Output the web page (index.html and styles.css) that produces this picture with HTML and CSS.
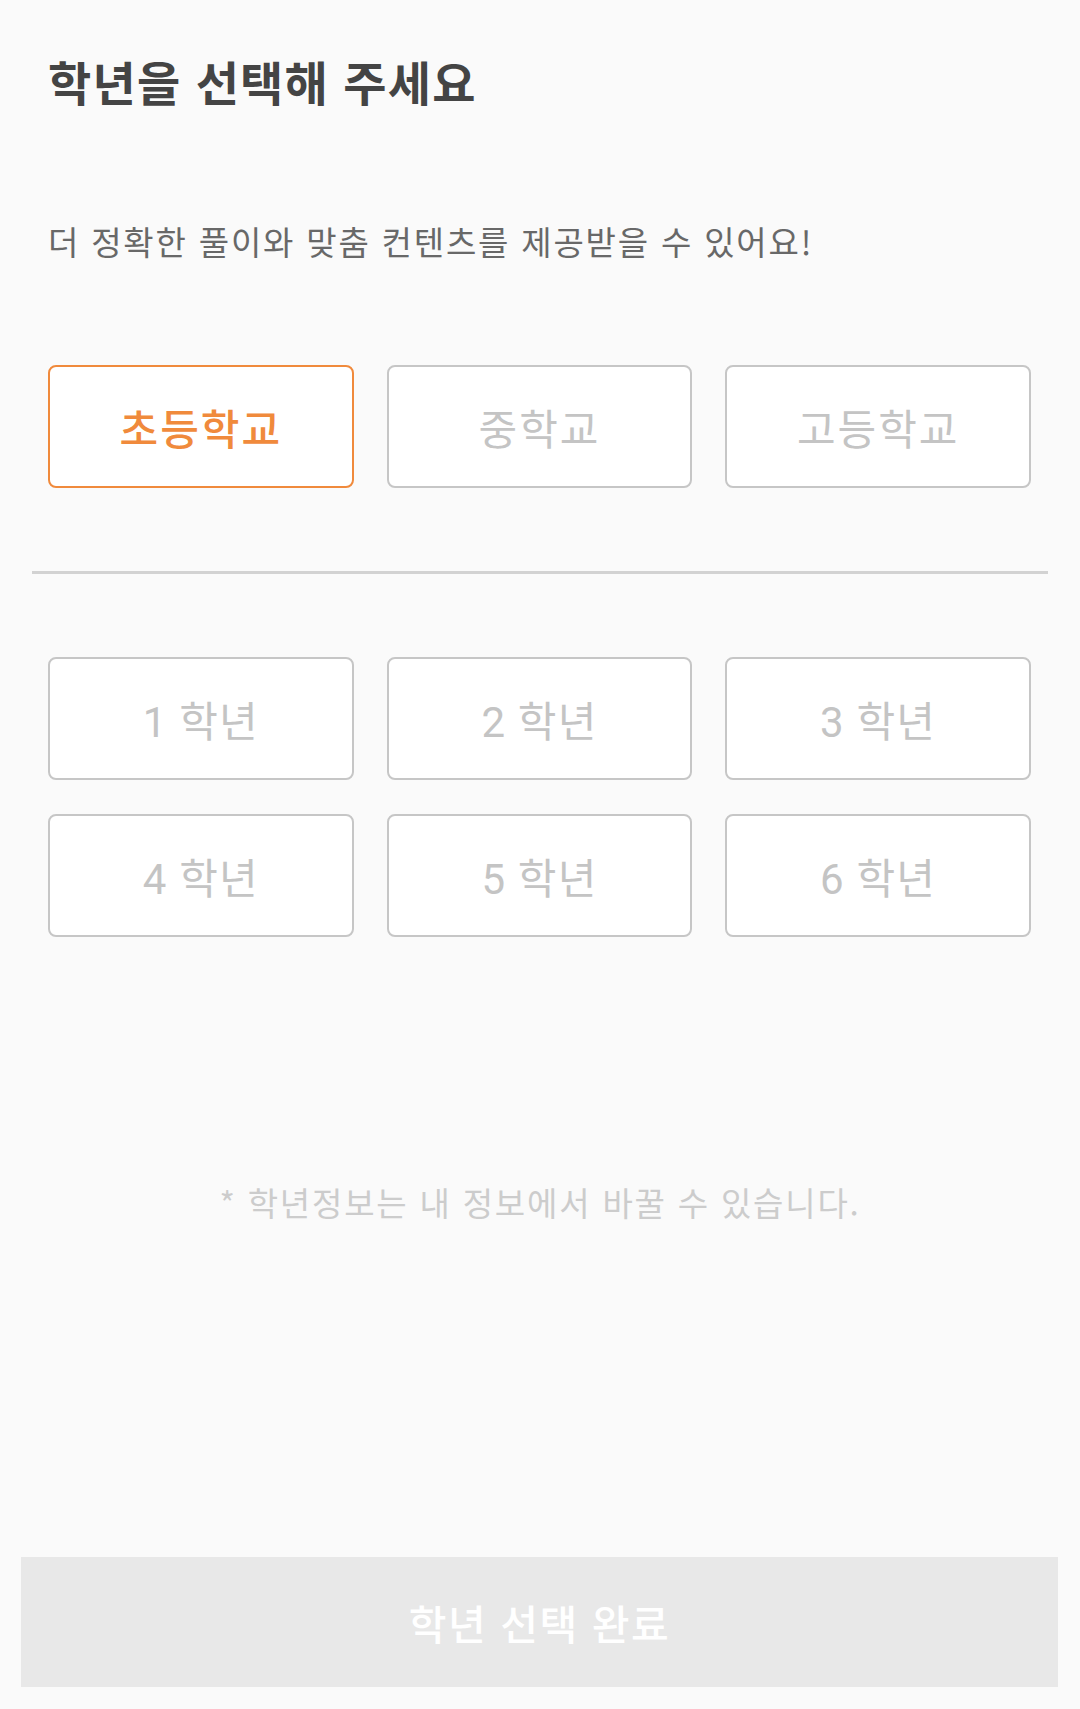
FILE: index.html
```html
<!DOCTYPE html>
<html lang="ko">
<head>
<meta charset="utf-8">
<title>학년 선택</title>
<link rel="stylesheet" href="styles.css">
</head>
<body>
<div class="page">
  <main class="content">
    <h1 class="title">학년을 선택해 주세요</h1>
    <p class="subtitle">더 정확한 풀이와 맞춤 컨텐츠를 제공받을 수 있어요!</p>
    <div class="grid schools">
      <button class="opt selected">초등학교</button>
      <button class="opt">중학교</button>
      <button class="opt">고등학교</button>
    </div>
    <div class="divider"></div>
    <div class="grid grades">
      <button class="opt">1 학년</button>
      <button class="opt">2 학년</button>
      <button class="opt">3 학년</button>
      <button class="opt">4 학년</button>
      <button class="opt">5 학년</button>
      <button class="opt">6 학년</button>
    </div>
    <p class="note">* 학년정보는 내 정보에서 바꿀 수 있습니다.</p>
  </main>
  <footer class="footer">
    <button class="done">학년 선택 완료</button>
  </footer>
</div>
</body>
</html>
```
FILE: styles.css
```css
* { box-sizing: border-box; }
html, body {
  margin: 0;
  padding: 0;
  background: #fafafa;
}
body {
  font-family: Roboto, "Noto Sans CJK KR", sans-serif;
}
.page {
  height: 1709px;
  display: flex;
  flex-direction: column;
}
.content {
  flex: 1;
  padding: 57px 0 0;
}
.title {
  margin: 0 48px;
  font-family: "Noto Sans CJK KR", sans-serif;
  font-size: 47px;
  line-height: 1;
  letter-spacing: 1.2px;
  font-weight: 700;
  color: #444444;
}
.subtitle {
  margin: 121px 48px 0;
  font-family: "Noto Sans CJK KR", sans-serif;
  font-size: 33px;
  line-height: 1;
  letter-spacing: 1.8px;
  font-weight: 400;
  color: #686868;
}
.grid {
  display: grid;
  grid-template-columns: repeat(3, 1fr);
  column-gap: 33px;
  row-gap: 34px;
  margin: 0 49px 0 48px;
}
.schools { margin-top: 107px; }
.grades { margin-top: 83px; }
.opt {
  height: 123px;
  background: #ffffff;
  border: 2px solid #c6c6c6;
  border-radius: 8px;
  font-family: Roboto, "Noto Sans CJK KR", sans-serif;
  font-size: 42px;
  letter-spacing: 1.2px;
  color: #c4c4c4;
  padding: 0;
}
.schools .opt {
  font-family: "Noto Sans CJK KR", sans-serif;
  letter-spacing: 2px;
}
.opt.selected {
  border-color: #f08a3c;
  color: #f08a3c;
  font-weight: 500;
}
.divider {
  height: 3px;
  background: #d2d2d2;
  margin: 83px 32px 0;
}
.note {
  margin: 249px 0 0;
  text-align: center;
  font-family: "Noto Sans CJK KR", sans-serif;
  font-size: 33px;
  line-height: 1;
  letter-spacing: 1.8px;
  color: #cccccc;
}
.footer {
  padding: 0 22px 22px 21px;
}
.done {
  width: 100%;
  height: 130px;
  border: none;
  background: #e8e8e8;
  color: #ffffff;
  font-family: "Noto Sans CJK KR", sans-serif;
  font-size: 41px;
  letter-spacing: 1.5px;
  font-weight: 500;
  padding: 0;
}
```
